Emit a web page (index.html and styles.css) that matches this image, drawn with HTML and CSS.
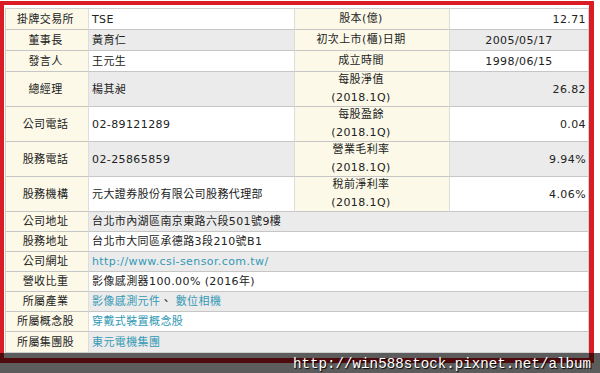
FILE: index.html
```html
<!DOCTYPE html>
<html lang="zh-Hant">
<head>
<meta charset="utf-8">
<link rel="stylesheet" href="styles.css">
</head>
<body>
<div class="frame">
  <div class="sheet">
    <div class="lab odd">掛牌交易所</div><div class="val odd">TSE</div><div class="lab2 odd">股本(億)</div><div class="num odd">12.71</div>
    <div class="lab even">董事長</div><div class="val even">黃育仁</div><div class="lab2 even">初次上市(櫃)日期</div><div class="num mid even">2005/05/17</div>
    <div class="lab odd">發言人</div><div class="val odd">王元生</div><div class="lab2 odd">成立時間</div><div class="num mid odd">1998/06/15</div>
    <div class="lab even">總經理</div><div class="val even">楊其昶</div><div class="lab2 even">每股淨值<br>(2018.1Q)</div><div class="num even">26.82</div>
    <div class="lab odd">公司電話</div><div class="val odd">02-89121289</div><div class="lab2 odd">每股盈餘<br>(2018.1Q)</div><div class="num odd">0.04</div>
    <div class="lab even">股務電話</div><div class="val even">02-25865859</div><div class="lab2 even">營業毛利率<br>(2018.1Q)</div><div class="num even">9.94%</div>
    <div class="lab odd">股務機構</div><div class="val odd">元大證券股份有限公司股務代理部</div><div class="lab2 odd">稅前淨利率<br>(2018.1Q)</div><div class="num odd">4.06%</div>
    <div class="lab even">公司地址</div><div class="val wide even">台北市內湖區南京東路六段501號9樓</div>
    <div class="lab odd">股務地址</div><div class="val wide odd">台北市大同區承德路3段210號B1</div>
    <div class="lab even">公司網址</div><div class="val wide even"><span class="link">http://www.csi-sensor.com.tw/</span></div>
    <div class="lab odd">營收比重</div><div class="val wide odd">影像感測器100.00% (2016年)</div>
    <div class="lab even">所屬產業</div><div class="val wide even"><span class="link">影像感測元件</span>、&nbsp;<span class="link">數位相機</span></div>
    <div class="lab odd">所屬概念股</div><div class="val wide odd"><span class="link">穿戴式裝置概念股</span></div>
    <div class="lab even last">所屬集團股</div><div class="val wide even last"><span class="link">東元電機集團</span></div>
  </div>
</div>
<div class="watermark"><span class="wm-text">http://win588stock.pixnet.net/album</span></div>
</body>
</html>
```

FILE: styles.css
```css
html, body {
  margin: 0;
  padding: 0;
  background: #ffffff;
}
body {
  width: 600px;
  height: 373px;
  position: relative;
  overflow: hidden;
  font-family: "DejaVu Sans", "Noto Sans CJK TC", sans-serif;
  font-size: 11px;
  letter-spacing: 0.4px;
  color: #222222;
}
.frame {
  box-sizing: border-box;
  width: 594px;
  margin-top: 1px;
  border-style: solid;
  border-color: #dc1c24;
  border-width: 4px 5px 5px 4px;
  padding: 3px 0 5px 1px;
  background: #ffffff;
}
.sheet {
  box-sizing: border-box;
  width: 584px;
  border: 1px solid #cfcfcf;
  display: grid;
  grid-template-columns: 83px 206px 155px 138px;
  grid-template-rows: repeat(3, 21px) repeat(4, 35px) repeat(7, 20px);
}
.sheet > div {
  box-sizing: border-box;
  display: flex;
  align-items: center;
  border-bottom: 1px solid #c6c6c6;
  line-height: 17px;
  white-space: nowrap;
}
.sheet > div.last {
  border-bottom: none;
}
.lab {
  background: #fcf9e8;
  justify-content: center;
  padding-right: 3px;
  border-right: 1px solid #dddddd;
}
.val {
  padding-left: 3px;
  border-right: 1px solid #dddddd;
}
.val.even, .num.even {
  background: #ebebeb;
}
.val.odd, .num.odd {
  background: #ffffff;
}
.wide {
  grid-column: span 3;
  border-right: none !important;
}
.sheet > .lab2 {
  background: #fcf9e8;
  justify-content: center;
  text-align: center;
  padding-right: 22px;
  border-right: 1px solid #dddddd;
  line-height: 18px;
}
.num {
  justify-content: flex-end;
  padding-right: 2px;
}
.num.mid {
  justify-content: center;
  padding-right: 0;
}
.link {
  color: #3399b5;
}
.watermark {
  position: absolute;
  left: 0;
  top: 353px;
  width: 600px;
  height: 20px;
  background: rgba(0, 0, 0, 0.64);
  display: flex;
  justify-content: flex-end;
  align-items: center;
  padding-right: 9px;
  box-sizing: border-box;
}
.wm-text {
  font-family: "Liberation Mono", monospace;
  font-size: 14.2px;
  letter-spacing: 0;
  color: #ffffff;
  text-shadow: 1px 1px 1px #000000;
  line-height: 20px;
  margin-top: 2px;
}
```
